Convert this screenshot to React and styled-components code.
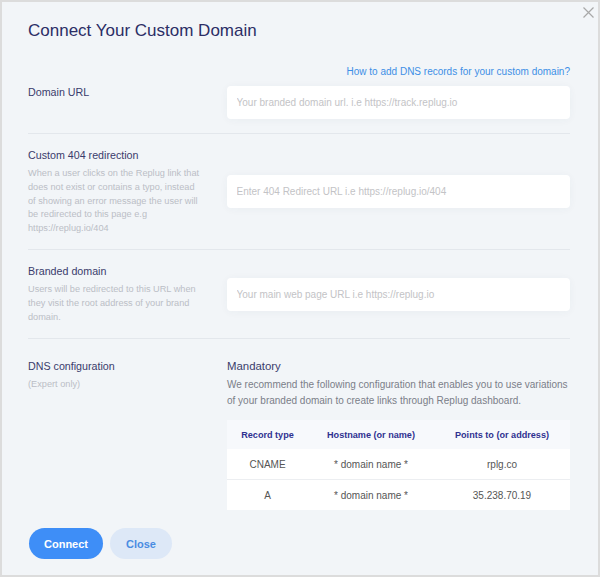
import React from 'react';
import styled, { createGlobalStyle } from 'styled-components';

const GlobalStyle = createGlobalStyle`
  html, body { margin: 0; padding: 0; background: #dcdcdc; }
  body { font-family: "Liberation Sans", Arial, sans-serif; }
  *, *::before, *::after { box-sizing: border-box; }
`;

const Modal = styled.div`
  position: relative;
  width: 600px;
  height: 577px;
  border: 2px solid #dcdcdc;
  background: #f2f5f8;
  padding: 19px 28px 0 26px;
  display: flex;
  flex-direction: column;
`;

const CloseIcon = styled.button`
  position: absolute;
  top: 5px;
  right: 4px;
  width: 11px;
  height: 11px;
  padding: 0;
  border: none;
  background: none;
  cursor: pointer;
  display: flex;
  svg { display: block; }
`;

const Title = styled.h2`
  margin: 0;
  font-size: 17px;
  line-height: 20px;
  font-weight: 400;
  color: #2c2e66;
`;

const Row = styled.section`
  display: grid;
  grid-template-columns: 199px 1fr;
  align-items: ${p => p.$align || 'start'};
  padding: ${p => p.$pad};
  margin-top: ${p => p.$mt || '0'};
  border-bottom: ${p => (p.$divider ? '1px solid #e3e7ec' : 'none')};
`;

const Label = styled.div`
  font-size: 10.7px;
  line-height: 14px;
  color: #3a3c6c;
  padding-top: ${p => p.$pt || '0'};
`;

const Desc = styled.p`
  margin: 5.5px 0 0;
  max-width: 174px;
  font-size: 9.2px;
  line-height: 13.8px;
  color: #bbbec6;
`;

const HelpLink = styled.a`
  display: block;
  text-align: right;
  font-size: 10px;
  line-height: 14px;
  color: #3d8fe6;
  text-decoration: none;
  margin-bottom: 7px;
`;

const Input = styled.input`
  display: block;
  width: 100%;
  height: 33px;
  border: none;
  border-radius: 4px;
  background: #fff;
  padding: 0 9.5px;
  font-family: inherit;
  font-size: 10px;
  color: #333;
  outline: none;
  box-shadow: 0 1px 8px rgba(40, 60, 90, 0.045);
  &::placeholder { color: #c3c3c6; }
`;

const SubTitle = styled.div`
  font-size: 11.4px;
  line-height: 16px;
  color: #3a3c6c;
`;

const Para = styled.p`
  margin: 3.5px 0 0;
  font-size: 10px;
  line-height: 16px;
  color: #7b7e88;
`;

const Table = styled.table`
  width: 100%;
  margin-top: 10.5px;
  border-collapse: collapse;
  table-layout: fixed;
`;

const Th = styled.th`
  height: 29.5px;
  padding: 0;
  background: #f7f9fc;
  font-size: 9.1px;
  font-weight: 700;
  color: #2f3190;
  text-align: center;
`;

const Td = styled.td`
  height: 30.5px;
  padding: 0;
  background: #fff;
  font-size: 10px;
  color: #555;
  text-align: center;
  border-top: ${p => (p.$line ? '1px solid #eceef1' : 'none')};
`;

const Footer = styled.div`
  display: flex;
  gap: 7px;
  margin-top: 18px;
  padding-left: 1px;
`;

const Button = styled.button`
  height: 30.5px;
  border: none;
  border-radius: 16px;
  padding: 0 ${p => (p.$variant === 'primary' ? '15px' : '16px')};
  font-family: inherit;
  font-size: 11px;
  font-weight: 700;
  cursor: pointer;
  background: ${p => (p.$variant === 'primary' ? '#3e8ef7' : '#dde8f7')};
  color: ${p => (p.$variant === 'primary' ? '#fff' : '#4a8ce2')};
`;

const records = [
  { type: 'CNAME', host: '* domain name *', to: 'rplg.co' },
  { type: 'A', host: '* domain name *', to: '35.238.70.19' },
];

export default function App() {
  return (
    <>
      <GlobalStyle />
      <Modal>
        <CloseIcon aria-label="Close">
          <svg width="11" height="11" viewBox="0 0 11 11">
            <path d="M0.5 0.5 L10.5 10.5 M10.5 0.5 L0.5 10.5" stroke="#a8a8a8" strokeWidth="1.2" fill="none" />
          </svg>
        </CloseIcon>
        <Title>Connect Your Custom Domain</Title>

        <Row $mt="24px" $pad="0 0 14px" $divider>
          <Label $pt="20px">Domain URL</Label>
          <div>
            <HelpLink href="#">How to add DNS records for your custom domain?</HelpLink>
            <Input placeholder="Your branded domain url. i.e https://track.replug.io" />
          </div>
        </Row>

        <Row $align="center" $pad="13.5px 0" $divider>
          <div>
            <Label>Custom 404 redirection</Label>
            <Desc>
              When a user clicks on the Replug link that does not exist or contains a typo, instead of showing an error message the user will be redirected to this page e.g https://replug.io/404
            </Desc>
          </div>
          <Input placeholder="Enter 404 Redirect URL i.e https://replug.io/404" />
        </Row>

        <Row $align="center" $pad="13.5px 0" $divider>
          <div>
            <Label>Branded domain</Label>
            <Desc>
              Users will be redirected to this URL when they visit the root address of your brand domain.
            </Desc>
          </div>
          <Input placeholder="Your main web page URL i.e https://replug.io" />
        </Row>

        <Row $pad="18.5px 0 0">
          <div>
            <Label $pt="1px">DNS configuration</Label>
            <Desc>(Expert only)</Desc>
          </div>
          <div>
            <SubTitle>Mandatory</SubTitle>
            <Para>
              We recommend the following configuration that enables you to use variations of your branded domain to create links through Replug dashboard.
            </Para>
            <Table>
              <colgroup>
                <col style={{ width: '81px' }} />
                <col style={{ width: '126px' }} />
                <col />
              </colgroup>
              <thead>
                <tr>
                  <Th>Record type</Th>
                  <Th>Hostname (or name)</Th>
                  <Th>Points to (or address)</Th>
                </tr>
              </thead>
              <tbody>
                {records.map((r, i) => (
                  <tr key={r.type}>
                    <Td $line={i > 0}>{r.type}</Td>
                    <Td $line={i > 0}>{r.host}</Td>
                    <Td $line={i > 0}>{r.to}</Td>
                  </tr>
                ))}
              </tbody>
            </Table>
          </div>
        </Row>

        <Footer>
          <Button $variant="primary">Connect</Button>
          <Button>Close</Button>
        </Footer>
      </Modal>
    </>
  );
}
